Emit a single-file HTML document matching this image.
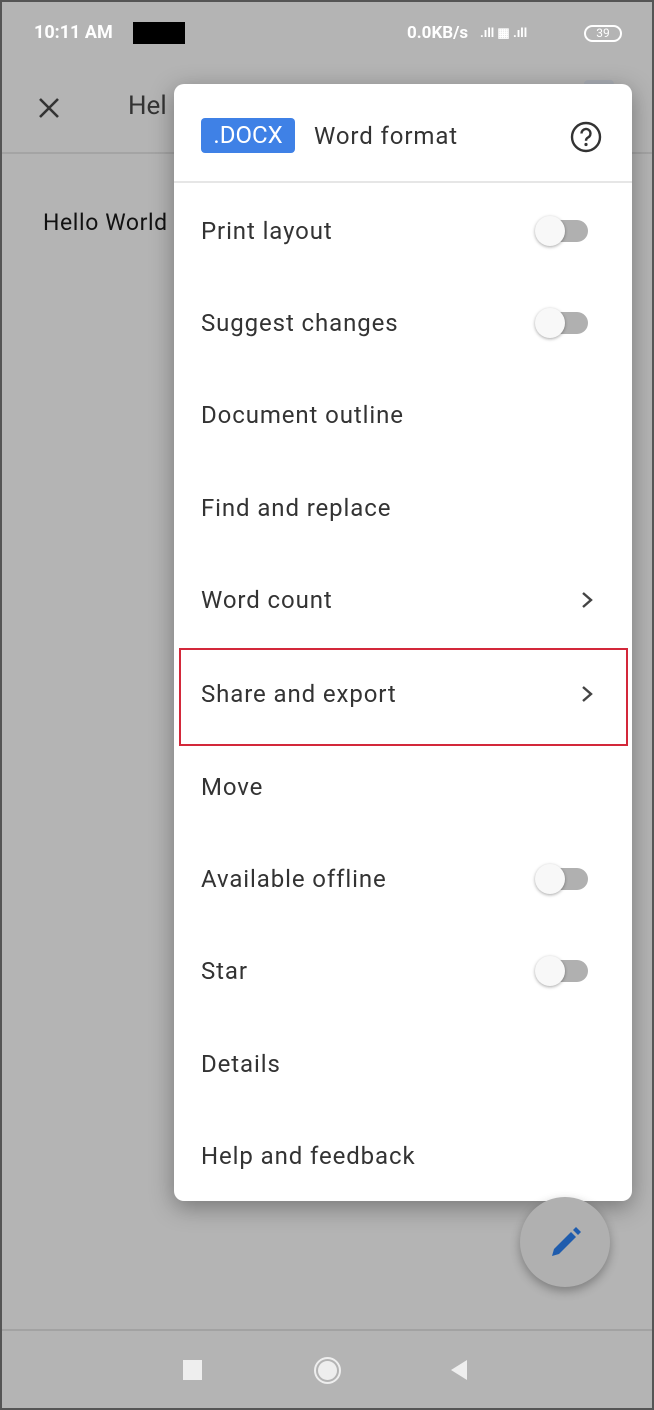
<!DOCTYPE html>
<html><head><meta charset="utf-8"><style>
*{margin:0;padding:0;box-sizing:border-box}
body{width:654px;height:1410px;background:#b4b4b4;position:relative;overflow:hidden;font-family:"Roboto","Liberation Sans",sans-serif}
.abs{position:absolute}
.frame{left:0;top:0;width:654px;height:1410px;border:2px solid #555;pointer-events:none;z-index:9}
.menu{left:174px;top:84px;width:458px;height:1117px;background:#fff;border-radius:10px;box-shadow:0 6px 24px rgba(0,0,0,.35)}
.item{position:absolute;left:27px;font-size:24px;color:#333;line-height:30px;letter-spacing:0.9px}
.tog{position:absolute;left:366px;width:48px;height:22px}
.tog .tr{position:absolute;left:6px;top:0;width:42px;height:22px;border-radius:11px;background:#b0b0b0}
.tog .th{position:absolute;left:-5px;top:-4px;width:30px;height:30px;border-radius:50%;background:#f8f8f8;box-shadow:0 1px 3px rgba(0,0,0,.35)}
.chev{position:absolute;left:406px;width:14px;height:20px}
</style></head><body>
<div class="abs frame"></div>
<div class="abs" style="left:34px;top:22px;color:#fff;font-size:18px;font-weight:bold">10:11 AM</div>
<div class="abs" style="left:133px;top:22px;width:52px;height:22px;background:#000"></div>
<div class="abs" style="left:407px;top:23px;color:#fff;font-size:17px;font-weight:bold">0.0KB/s</div>
<div class="abs" style="left:480px;top:26px;color:#fff;font-size:13px;font-weight:bold">.ıll ▦ .ıll</div>
<div class="abs" style="left:584px;top:25px;width:38px;height:17px;border:2px solid #fff;border-radius:9px;color:#fff;font-size:12px;text-align:center;line-height:13px">39</div>
<div class="abs" style="left:0;top:152px;width:654px;height:2px;background:#a4a4a4"></div>
<svg class="abs" style="left:37px;top:96px" width="24" height="24" viewBox="0 0 24 24"><path d="M3 3L21 21M21 3L3 21" stroke="#333" stroke-width="2.6"/></svg>
<div class="abs" style="left:128px;top:91px;font-size:26px;color:#333">Hel</div>
<div class="abs" style="left:584px;top:80px;width:30px;height:70px;background:#a9adb4;border-radius:4px"></div>
<div class="abs" style="left:43px;top:209px;font-size:23px;letter-spacing:0.6px;color:#111">Hello World</div>
<div class="menu abs">
 <div class="abs" style="left:27px;top:34px;width:94px;height:35px;background:#3f81e6;border-radius:4px;color:#fff;font-size:24px;text-align:center;line-height:35px">.DOCX</div>
 <div class="item" style="left:140px;top:37px">Word format</div>
 <svg class="abs" style="left:396px;top:37px" width="32" height="32" viewBox="0 0 32 32"><circle cx="16" cy="16" r="14" fill="none" stroke="#333" stroke-width="2.4"/><path d="M11.5 12.5a4.5 4.5 0 1 1 6.5 4c-1.5.8-2 1.6-2 3.2" fill="none" stroke="#333" stroke-width="2.4"/><circle cx="16" cy="23.5" r="1.6" fill="#333"/></svg>
 <div class="abs" style="left:0;top:97px;width:458px;height:2px;background:#e6e6e6"></div>
 <div class="item" style="top:132px">Print layout</div><div class="tog" style="top:136px"><div class="tr"></div><div class="th"></div></div>
 <div class="item" style="top:224px">Suggest changes</div><div class="tog" style="top:228px"><div class="tr"></div><div class="th"></div></div>
 <div class="item" style="top:316px">Document outline</div>
 <div class="item" style="top:409px">Find and replace</div>
 <div class="item" style="top:501px">Word count</div>
 <svg class="chev" style="top:506px" viewBox="0 0 14 20"><path d="M3 3L11 10L3 17" fill="none" stroke="#444" stroke-width="2.4"/></svg>
 <div class="abs" style="left:5px;top:564px;width:449px;height:98px;border:2px solid #d3283a"></div>
 <div class="item" style="top:595px">Share and export</div>
 <svg class="chev" style="top:600px" viewBox="0 0 14 20"><path d="M3 3L11 10L3 17" fill="none" stroke="#444" stroke-width="2.4"/></svg>
 <div class="item" style="top:688px">Move</div>
 <div class="item" style="top:780px">Available offline</div><div class="tog" style="top:784px"><div class="tr"></div><div class="th"></div></div>
 <div class="item" style="top:872px">Star</div><div class="tog" style="top:876px"><div class="tr"></div><div class="th"></div></div>
 <div class="item" style="top:965px">Details</div>
 <div class="item" style="top:1057px">Help and feedback</div>
</div>
<div class="abs" style="left:520px;top:1197px;width:90px;height:90px;border-radius:50%;background:#b0b0b0;box-shadow:0 4px 10px rgba(0,0,0,.3)"></div>
<svg class="abs" style="left:548px;top:1226px" width="34" height="34" viewBox="0 0 34 34"><path d="M4 30L6 23L23 6L28 11L11 28Z" fill="#1f5cad"/><path d="M25 4L28 1L33 6L30 9Z" fill="#1f5cad"/></svg>
<div class="abs" style="left:0;top:1329px;width:654px;height:2px;background:#a2a2a2"></div>
<div class="abs" style="left:183px;top:1360px;width:19px;height:20px;background:#eee"></div>
<div class="abs" style="left:314px;top:1357px;width:27px;height:27px;border-radius:50%;border:2px solid #eee;padding:2px"><div style="width:100%;height:100%;border-radius:50%;background:#eee"></div></div>
<svg class="abs" style="left:449px;top:1359px" width="20" height="22" viewBox="0 0 20 22"><path d="M18 1L2 11L18 21Z" fill="#eee"/></svg>
</body></html>
